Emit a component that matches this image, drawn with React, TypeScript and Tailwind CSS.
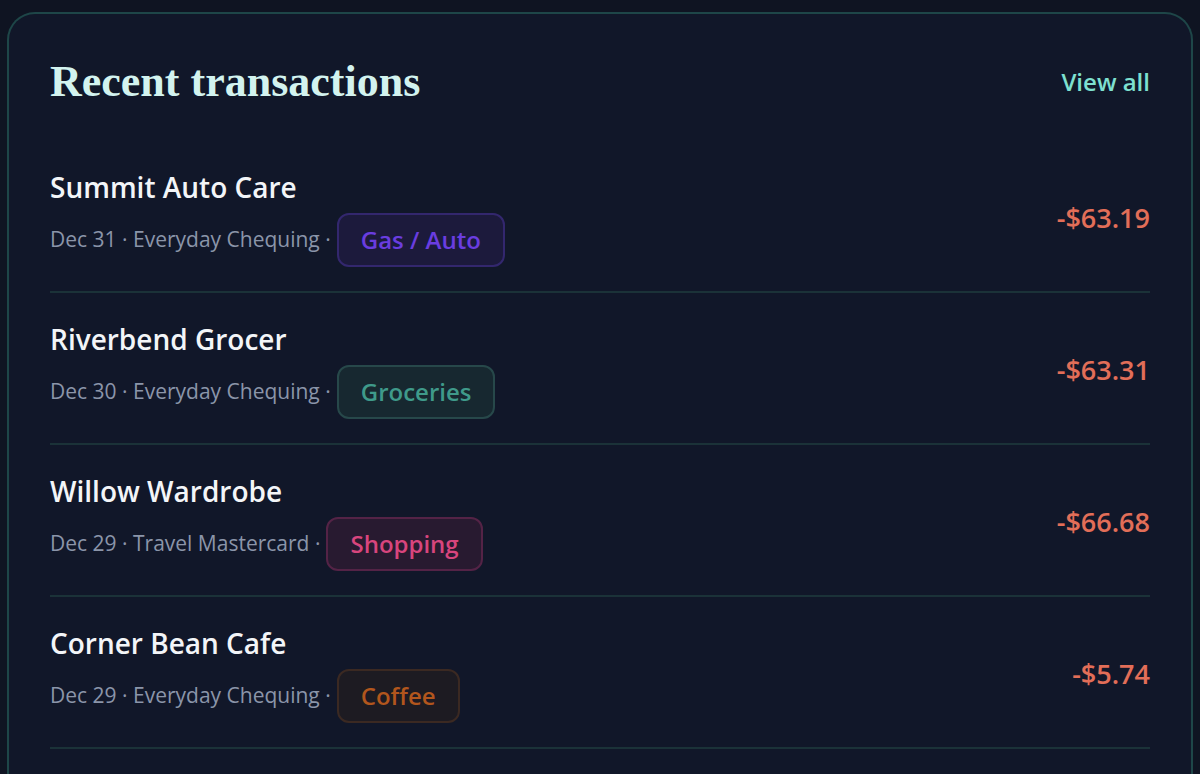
import React from "react";

// ===== Types =====
type Category = "gas" | "groceries" | "shopping" | "coffee";

interface Txn {
  id: string;
  merchant: string;
  date: string;
  account: string;
  category: Category;
  label: string;
  amount: string;
}

// ===== Sample data =====
const txns: Txn[] = [
  { id: "t1", merchant: "Summit Auto Care", date: "Dec 31", account: "Everyday Chequing", category: "gas", label: "Gas / Auto", amount: "-$63.19" },
  { id: "t2", merchant: "Riverbend Grocer", date: "Dec 30", account: "Everyday Chequing", category: "groceries", label: "Groceries", amount: "-$63.31" },
  { id: "t3", merchant: "Willow Wardrobe", date: "Dec 29", account: "Travel Mastercard", category: "shopping", label: "Shopping", amount: "-$66.68" },
  { id: "t4", merchant: "Corner Bean Cafe", date: "Dec 29", account: "Everyday Chequing", category: "coffee", label: "Coffee", amount: "-$5.74" },
];

// ===== Small UI bits =====
function CategoryBadge({ category, label }: { category: Category; label: string }) {
  const base =
    "inline-flex h-[54px] items-center rounded-[12px] border-2 px-[22px] text-[24px] font-semibold";
  const cls =
    category === "gas"
      ? `${base} bg-[#1c1a3c] border-[#33276e] text-[#6a3de0]`
      : category === "groceries"
      ? `${base} bg-[#172830] border-[#27484a] text-[#3f9a8a]`
      : category === "shopping"
      ? `${base} bg-[#281a30] border-[#542346] text-[#d8457d]`
      : `${base} bg-[#1d1b22] border-[#3b2922] text-[#b2561d]`;
  return <span className={cls}>{label}</span>;
}

function TxnRow({ t }: { t: Txn }) {
  return (
    <li className="flex items-center justify-between border-b-2 border-[#1b3238] pt-[28px] pb-[24px]">
      <div className="flex flex-col gap-[8px]">
        <span className="text-[28px] leading-[36px] font-semibold text-[#f3f5f8]">{t.merchant}</span>
        <div className="flex items-center gap-[6px] text-[21px] text-[#8b95a9]">
          <span>
            {t.date} · {t.account} ·
          </span>
          <CategoryBadge category={t.category} label={t.label} />
        </div>
      </div>
      <span className="text-[27px] font-semibold text-[#e26e58]">{t.amount}</span>
    </li>
  );
}

// ===== Page =====
export default function App() {
  return (
    <div
      className="min-h-[774px] bg-[#0f1422] pt-[12px] pl-[7px] pr-[7px]"
      style={{ fontFamily: '"Open Sans", "Noto Sans", sans-serif' }}
    >
      <section className="min-h-[800px] rounded-t-[28px] border-2 border-b-0 border-[#1e4648] bg-[#111729] px-[41px] pt-[42px]">
        <header className="mb-[33px] flex items-center justify-between">
          <h2
            className="text-[44px] leading-[52px] font-semibold text-[#d3f3ef]"
            style={{ fontFamily: '"Liberation Serif", "DejaVu Serif", serif' }}
          >
            Recent transactions
          </h2>
          <a href="#" className="text-[24px] font-semibold text-[#7ee0d0]">
            View all
          </a>
        </header>
        <ul role="list">
          {txns.map((t) => (
            <TxnRow key={t.id} t={t} />
          ))}
        </ul>
      </section>
    </div>
  );
}
